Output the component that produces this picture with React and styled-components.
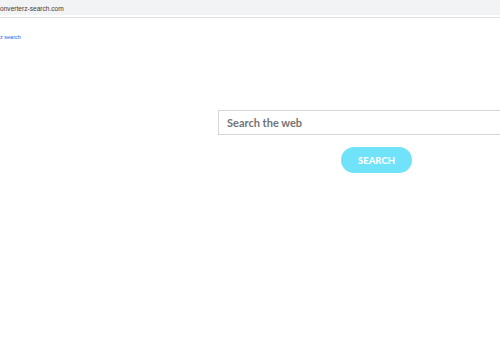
import React from 'react';
import styled, { createGlobalStyle } from 'styled-components';

const GlobalStyle = createGlobalStyle`
    html, body {
        margin: 0;
        padding: 0;
        background: #ffffff;
        overflow: hidden;
    }
`;

const Page = styled.div`
    width: 500px;
    height: 350px;
    overflow: hidden;
    font-family: "Lato", "Open Sans", sans-serif;
`;

const AddressBar = styled.div`
    height: 14px;
    padding-top: 1px;
    background: #f1f3f4;
    display: flex;
    align-items: center;
    font-family: "Liberation Sans", Arial, sans-serif;
    font-size: 6.6px;
    color: #3c4043;
    border-bottom: 2px solid #ffffff;
    box-shadow: 0 1px 0 #e2e2e2;
    box-sizing: content-box;
`;

const TopLink = styled.a`
    display: block;
    margin-top: 17px;
    font-family: "Liberation Sans", Arial, sans-serif;
    font-size: 5.5px;
    color: #2a62e6;
    text-decoration: none;
`;

const SearchArea = styled.form`
    width: 317px;
    margin: 70px 0 0 218px;
    display: flex;
    flex-direction: column;
    align-items: center;
`;

const SearchInput = styled.div`
    box-sizing: border-box;
    width: 100%;
    height: 25px;
    border: 1px solid #d6d6d6;
    display: flex;
    align-items: center;
    padding-left: 8px;
    font-family: "Lato", sans-serif;
    font-weight: bold;
    font-size: 11px;
    color: #747474;
`;

const SearchButton = styled.button`
    margin-top: 12px;
    width: 71px;
    height: 26px;
    border: none;
    border-radius: 13px;
    background: #70e3fa;
    color: #ffffff;
    font-family: "Lato", sans-serif;
    font-weight: 900;
    font-size: 9.5px;
    padding: 0;
`;

export default function App() {
    return (
        <Page>
            <GlobalStyle />
            <AddressBar>onverterz-search.com</AddressBar>
            <TopLink href="#">z search</TopLink>
            <SearchArea onSubmit={(e) => e.preventDefault()}>
                <SearchInput>Search the web</SearchInput>
                <SearchButton type="submit">SEARCH</SearchButton>
            </SearchArea>
        </Page>
    );
}
